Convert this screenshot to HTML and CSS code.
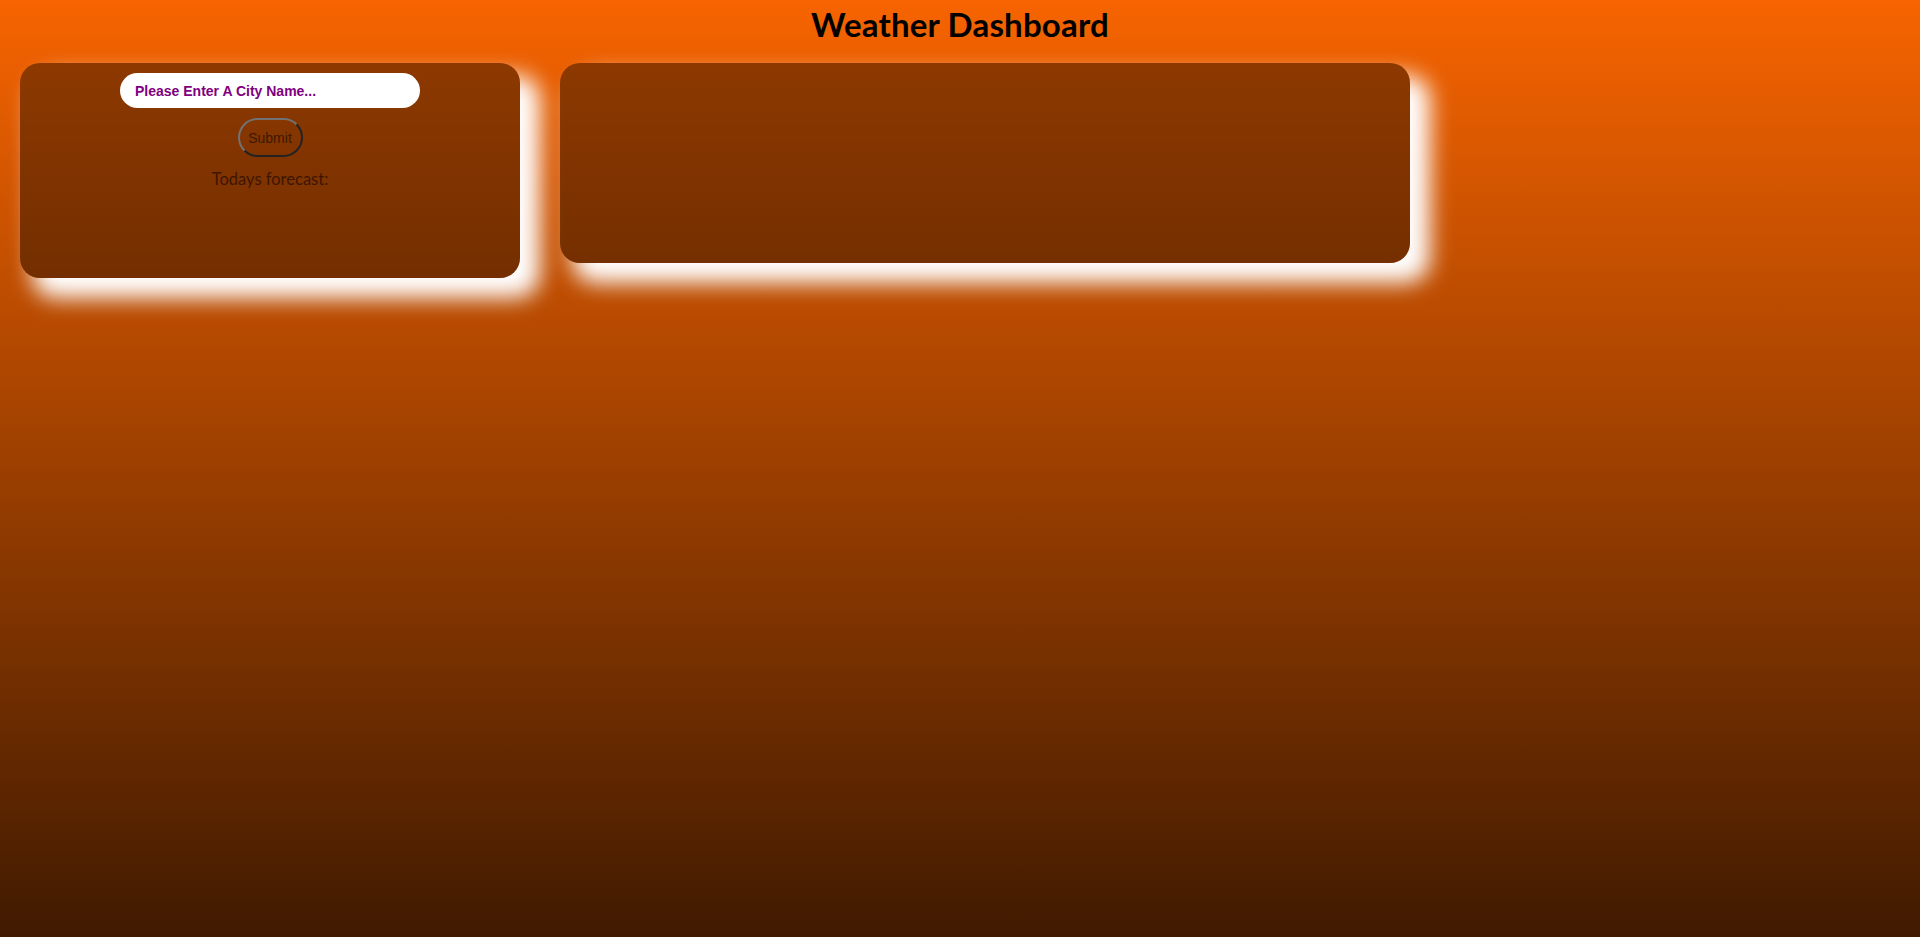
FILE: index.html
```html
<!DOCTYPE html>
<html lang="en">
<head>
<meta charset="utf-8">
<title>Weather Dashboard</title>
<link rel="stylesheet" href="styles.css">
</head>
<body>
  <h1 class="title">Weather Dashboard</h1>
  <main class="layout">
    <section class="card card-search">
      <input class="city-input" type="text" placeholder="Please Enter A City Name...">
      <button class="submit-btn" type="button">Submit</button>
      <p class="forecast-label">Todays forecast:</p>
    </section>
    <section class="card card-results"></section>
  </main>
</body>
</html>
```

FILE: styles.css
```css
html {
  height: 100%;
}
body {
  margin: 0;
  min-height: 100%;
  background: linear-gradient(180deg, #f76400 0%, #401a00 100%);
  font-family: Lato, "Open Sans", sans-serif;
}
.title {
  margin: 0;
  padding-top: 4px;
  height: 59px;
  text-align: center;
  font-size: 33px;
  font-weight: 700;
  line-height: 40px;
  letter-spacing: 0.2px;
  color: #000;
}
.layout {
  display: flex;
  align-items: flex-start;
  gap: 40px;
  padding: 0 20px;
}
.card {
  background: rgba(0, 0, 0, 0.4);
  border-radius: 20px;
  box-shadow: 16px 16px 22px 4px #ffffff;
}
.card-search {
  width: 500px;
  height: 215px;
  box-sizing: border-box;
  padding-top: 10px;
  display: flex;
  flex-direction: column;
  align-items: center;
}
.card-results {
  width: 850px;
  height: 200px;
}
.city-input {
  width: 300px;
  height: 35px;
  box-sizing: border-box;
  border: none;
  border-radius: 18px;
  padding: 0 15px;
  background: #fff;
  font-family: "Liberation Sans", Arial, sans-serif;
  font-size: 14px;
  font-weight: 700;
  color: #800080;
  outline: none;
}
.city-input::placeholder {
  color: #800080;
  opacity: 1;
}
.submit-btn {
  margin-top: 10px;
  width: 65px;
  height: 39px;
  box-sizing: border-box;
  border: 2px solid;
  border-color: #727272 #232323 #232323 #727272;
  border-radius: 20px;
  background: transparent;
  font-family: "Liberation Sans", Arial, sans-serif;
  font-size: 14px;
  color: #3e1800;
  padding: 0;
}
.forecast-label {
  margin: 11px 0 0;
  font-size: 16.5px;
  line-height: 22px;
  color: #3e1600;
}
```
